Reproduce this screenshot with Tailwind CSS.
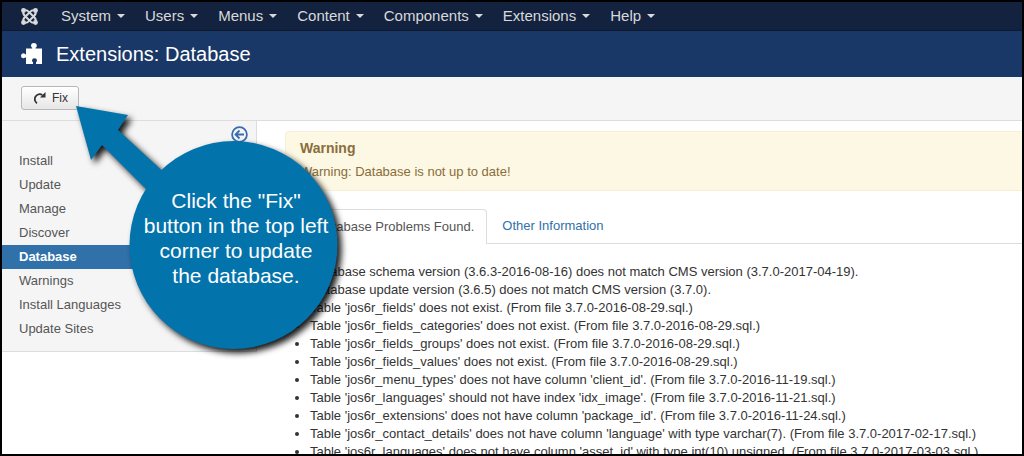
<!DOCTYPE html>
<html lang="en">
<head>
<meta charset="utf-8">
<title>Extensions: Database</title>
<script src="https://cdn.jsdelivr.net/npm/@tailwindcss/browser@4"></script>
</head>
<body class="font-['Liberation_Sans',Arial,sans-serif] text-[13px] leading-[18px] text-[#333]">
<div class="relative flex h-screen flex-col overflow-hidden border-2 border-black bg-white">
  <nav class="flex shrink-0 items-center gap-5 border-b border-[#0d1a30] bg-[#13233f] pl-[19px] text-[15px] leading-7 text-[#d9d9d9]">
    <a href="#" aria-label="Joomla" class="block">
      <svg class="size-[17px]" viewBox="0 0 17 17" fill="none" stroke="#d9d9d9" stroke-width="2" stroke-linecap="round" stroke-linejoin="round">
        <path d="M2.500 2.500Q6 1.500 8 4L13 9Q15.500 11 14.500 14.500M14.500 2.500Q11 1.500 9 4L4 9Q1.500 11 2.500 14.500M2.500 2.500Q1.500 6 4 8L9 13Q11 15.500 14.500 14.500M14.500 2.500Q15.500 6 13 8L8 13Q6 15.500 2.500 14.500"/>
        <g fill="#d9d9d9" stroke="none"><circle cx="2.500" cy="2.500" r="2.400"/><circle cx="14.500" cy="2.500" r="2.400"/><circle cx="2.500" cy="14.500" r="2.400"/><circle cx="14.500" cy="14.500" r="2.400"/></g>
      </svg>
    </a>
    <div class="flex gap-5 pl-[3px]">
      <button class="flex items-center gap-1.5">System<span class="border-x-4 border-t-4 border-x-transparent border-t-[#d9d9d9]"></span></button>
      <button class="flex items-center gap-1.5">Users<span class="border-x-4 border-t-4 border-x-transparent border-t-[#d9d9d9]"></span></button>
      <button class="flex items-center gap-1.5">Menus<span class="border-x-4 border-t-4 border-x-transparent border-t-[#d9d9d9]"></span></button>
      <button class="flex items-center gap-1.5">Content<span class="border-x-4 border-t-4 border-x-transparent border-t-[#d9d9d9]"></span></button>
      <button class="flex items-center gap-1.5">Components<span class="border-x-4 border-t-4 border-x-transparent border-t-[#d9d9d9]"></span></button>
      <button class="flex items-center gap-1.5">Extensions<span class="border-x-4 border-t-4 border-x-transparent border-t-[#d9d9d9]"></span></button>
      <button class="flex items-center gap-1.5">Help<span class="border-x-4 border-t-4 border-x-transparent border-t-[#d9d9d9]"></span></button>
    </div>
  </nav>
  <header class="flex shrink-0 items-center gap-3.5 bg-[#1a3867] py-2.5 pl-[19px] text-white">
    <svg class="mb-0.5 size-[21px]" viewBox="0 0 21 21" fill="#fff"><path d="M5 5.500h6.200V4.800Q10 4 10 2.700a2.900 2.700 0 0 1 5.800 0Q15.800 4 14.600 4.800V5.500H21V21h-6v-1.800q1-.5 1-1.700a2.500 2.300 0 0 0-5 0q0 1.200 1 1.700V21H5v-6.500H4.200Q3.500 15.300 2.400 15.300a2.400 2.500 0 0 1 0-5Q3.500 10.300 4.200 11.200H5z"/></svg>
    <h1 class="text-xl leading-[26px]">Extensions: Database</h1>
  </header>
  <div class="shrink-0 border-b border-[#ddd] bg-[#f5f5f5] pt-[9px] pb-2.5 pl-[19px]">
    <button class="flex items-center gap-1.5 rounded-[3px] border border-[#b8b8b8] bg-linear-to-b from-white to-[#e6e6e6] px-2.5 py-0.5 text-xs leading-[18px] text-[#333]">
      <svg class="size-3.5" viewBox="0 0 14 14" fill="none" stroke="#333" stroke-width="1.800"><path d="M5 12.200A4.800 4.800 0 1 1 10.300 4"/><path d="M13.500 1v5.500H8z" fill="#333" stroke="none"/></svg>
      Fix
    </button>
  </div>
  <div class="flex min-h-0 grow items-start">
    <aside class="w-1/4 max-w-[255px] shrink-0 border-r border-b border-[#ddd] bg-[#f5f5f5] pb-2.5 text-[#555]">
      <div class="flex h-7 items-start justify-end pt-[5px] pr-2">
        <button aria-label="Hide sidebar"><svg class="size-[17px]" viewBox="0 0 17 17" fill="none" stroke="#3a6cb0" stroke-width="1.800"><circle cx="8.500" cy="8.500" r="7.400"/><path d="M13 8.500H5M8.500 4.500l-4 4 4 4"/></svg></button>
      </div>
      <ul class="leading-6">
        <li><a href="#" class="block pl-[17px]">Install</a></li>
        <li><a href="#" class="block pl-[17px]">Update</a></li>
        <li><a href="#" class="block pl-[17px]">Manage</a></li>
        <li><a href="#" class="block pl-[17px]">Discover</a></li>
        <li><a href="#" class="block bg-[#3071a9] pl-[17px] font-bold text-white">Database</a></li>
        <li><a href="#" class="block pl-[17px]">Warnings</a></li>
        <li><a href="#" class="block pl-[17px]">Install Languages</a></li>
        <li><a href="#" class="block pl-[17px]">Update Sites</a></li>
      </ul>
    </aside>
    <main class="min-w-0 grow pt-2.5 pl-7">
      <div class="rounded-l border border-r-0 border-[#fbeed5] bg-[#fcf8e3] px-3.5 pt-1.5 pb-[9px] text-[#8a6d3b]">
        <h2 class="text-sm leading-5 font-bold">Warning</h2>
        <p class="pt-[5px]">Warning: Database is not up to date!</p>
      </div>
      <div class="mt-[18px] flex border-b border-[#ddd]">
        <button class="-mb-px rounded-t border border-b-0 border-[#ddd] bg-white px-3 py-2 text-[#555]">14 Database Problems Found.</button>
        <button class="px-[15px] py-2 text-[#3071a9]">Other Information</button>
      </div>
      <ul class="list-disc pt-[19px] pl-[25px] whitespace-nowrap">
        <li>Database schema version (3.6.3-2016-08-16) does not match CMS version (3.7.0-2017-04-19).</li>
        <li>Database update version (3.6.5) does not match CMS version (3.7.0).</li>
        <li>Table 'jos6r_fields' does not exist. (From file 3.7.0-2016-08-29.sql.)</li>
        <li>Table 'jos6r_fields_categories' does not exist. (From file 3.7.0-2016-08-29.sql.)</li>
        <li>Table 'jos6r_fields_groups' does not exist. (From file 3.7.0-2016-08-29.sql.)</li>
        <li>Table 'jos6r_fields_values' does not exist. (From file 3.7.0-2016-08-29.sql.)</li>
        <li>Table 'jos6r_menu_types' does not have column 'client_id'. (From file 3.7.0-2016-11-19.sql.)</li>
        <li>Table 'jos6r_languages' should not have index 'idx_image'. (From file 3.7.0-2016-11-21.sql.)</li>
        <li>Table 'jos6r_extensions' does not have column 'package_id'. (From file 3.7.0-2016-11-24.sql.)</li>
        <li>Table 'jos6r_contact_details' does not have column 'language' with type varchar(7). (From file 3.7.0-2017-02-17.sql.)</li>
        <li>Table 'jos6r_languages' does not have column 'asset_id' with type int(10) unsigned. (From file 3.7.0-2017-03-03.sql.)</li>
      </ul>
    </main>
  </div>
  <!-- Callout with arrow pointing at the Fix button -->
  <div class="pointer-events-none absolute top-[102px] left-[72px] h-[260px] w-[280px]">
    <svg class="absolute inset-0 drop-shadow-[4px_4px_3px_rgb(0_0_0/0.9)]" width="280" height="260" viewBox="74 104 280 260" fill="#0373ab">
      <path d="M76 106l52 9-10 15 50 46-17 18-49-49-11 15z"/>
      <circle cx="233.500" cy="245" r="104"/>
    </svg>
    <p class="absolute top-[84px] left-[58px] w-[208px] text-center text-[21px] leading-[25px] text-white">Click the "Fix"<br>button in the top left<br>corner to update<br>the database.</p>
  </div>
</div>
</body>
</html>
